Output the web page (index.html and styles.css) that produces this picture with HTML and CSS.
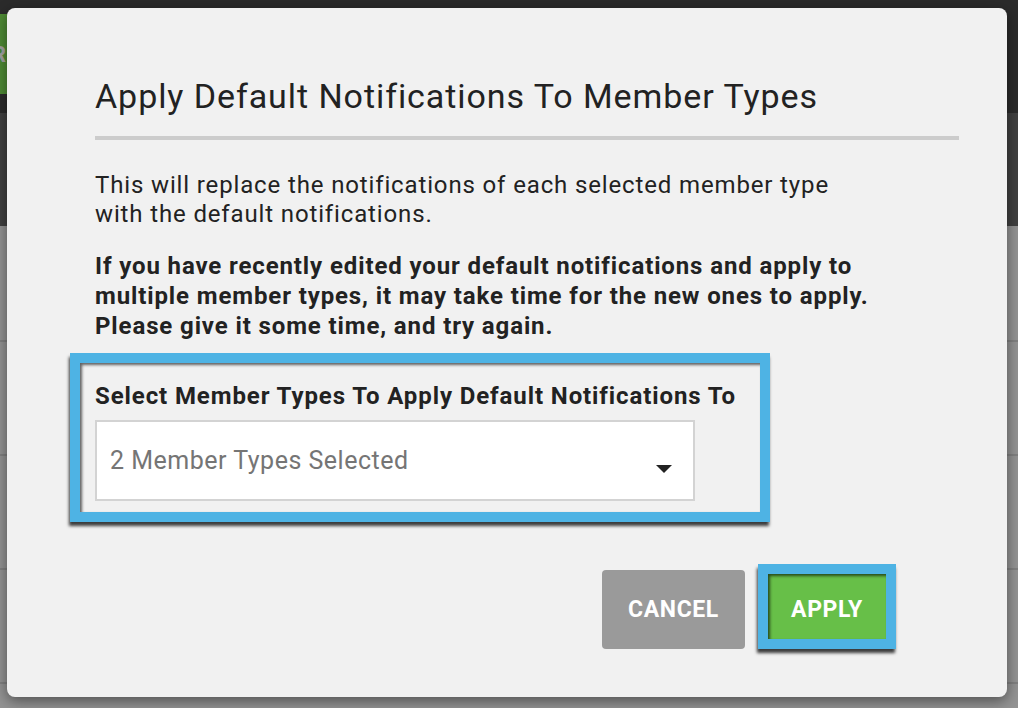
FILE: index.html
```html
<!DOCTYPE html>
<html>
<head>
<meta charset="utf-8">
<link rel="stylesheet" href="styles.css">
</head>
<body>
<div class="page">
  <header class="topbar">
    <div class="green-btn">ER</div>
  </header>
  <div class="subbar"></div>
  <div class="row first"></div>
  <div class="row"></div>
  <div class="row"></div>
  <div class="row"></div>
</div>

<div class="modal">
  <h1 class="title">Apply Default Notifications To Member Types</h1>
  <p class="desc">This will replace the notifications of each selected member type<br>with the default notifications.</p>
  <p class="warn">If you have recently edited your default notifications and apply to<br>multiple member types, it may take time for the new ones to apply.<br>Please give it some time, and try again.</p>
  <div class="field highlight">
    <label class="field-label">Select Member Types To Apply Default Notifications To</label>
    <div class="select">
      <span class="select-value">2 Member Types Selected</span>
      <svg class="caret" width="16" height="8" viewBox="0 0 16 8"><path d="M0 0H16L8 8Z" fill="#222"/></svg>
    </div>
  </div>
  <div class="actions">
    <button class="btn btn-cancel">CANCEL</button>
    <div class="highlight-btn"><button class="btn btn-apply">APPLY</button></div>
  </div>
</div>
</body>
</html>
```
FILE: styles.css
```css
* { box-sizing: border-box; }
html, body { margin: 0; padding: 0; }
body {
  width: 1018px;
  height: 708px;
  overflow: hidden;
  font-family: Roboto, "Liberation Sans", sans-serif;
  background: #939393;
  position: relative;
}
.page { width: 1018px; }
.topbar {
  height: 113px;
  background: #2b2b2b;
  padding-top: 14px;
}
.green-btn {
  width: 60px;
  height: 80px;
  margin-left: -52px;
  background: #4e8a34;
  color: #a3a3a3;
  font-weight: 700;
  font-size: 22px;
  display: flex;
  align-items: center;
  justify-content: flex-end;
  padding-right: 2px;
}
.subbar {
  height: 113px;
  background: #404040;
}
.row {
  height: 114px;
  background: #939393;
  border-bottom: 2px solid #818181;
}
.row.first { height: 116px; }

.modal {
  position: absolute;
  left: 7px;
  top: 8px;
  width: 1000px;
  height: 689px;
  background: #f1f1f1;
  border-radius: 8px;
  box-shadow: 0 4px 14px rgba(0,0,0,0.45);
  padding: 0 48px 0 88px;
  color: #222;
}
.title {
  margin: 0;
  padding-top: 68px;
  font-size: 34px;
  font-weight: 400;
  letter-spacing: 0.93px;
  line-height: 40px;
  color: #222;
  padding-bottom: 20px;
  border-bottom: 4px solid #cccccc;
}
.desc {
  margin: 31px 0 0 0;
  font-size: 24px;
  letter-spacing: 0.86px;
  line-height: 29px;
}
.warn {
  margin: 22px 0 0 0;
  font-size: 24px;
  letter-spacing: 0.88px;
  line-height: 30px;
  font-weight: 700;
}
.highlight {
  margin: 12px 0 0 -25px;
  width: 700px;
  border: 10px solid #4eb3e4;
  box-shadow: -1px 4px 3px rgba(0,0,0,0.75), inset 2px 2px 3px rgba(0,0,0,0.6);
  padding: 19px 65px 11px 15px;
}
.field-label {
  display: block;
  white-space: nowrap;
  font-size: 24px;
  font-weight: 700;
  letter-spacing: 0.9px;
  line-height: 29px;
  margin-bottom: 9px;
}
.select {
  height: 81px;
  background: #fff;
  border: 2px solid #d3d3d3;
  display: flex;
  align-items: center;
  justify-content: space-between;
  padding: 0 21px 0 13px;
}
.select-value {
  font-size: 25px;
  letter-spacing: 0.5px;
  color: #757575;
}
.caret { margin-top: 17px; }

.actions {
  display: flex;
  justify-content: flex-end;
  align-items: flex-end;
  gap: 13px;
  margin-top: 42px;
  padding-right: 63px;
}
.btn {
  border: 0;
  font-family: Roboto, "Liberation Sans", sans-serif;
  font-weight: 700;
  font-size: 23px;
  letter-spacing: 0.6px;
  color: #fff;
  cursor: pointer;
  padding: 0;
}
.btn-cancel {
  width: 143px;
  height: 79px;
  background: #9a9a9a;
  border-radius: 4px;
}
.highlight-btn {
  border: 10px solid #4eb3e4;
  box-shadow: -1px 4px 3px rgba(0,0,0,0.75);
  width: 138px;
  height: 85px;
}
.btn-apply {
  display: block;
  width: 100%;
  height: 100%;
  padding-top: 6px;
  background: #67bf48;
  box-shadow: inset 2px 2px 3px rgba(0,0,0,0.6);
}
```
